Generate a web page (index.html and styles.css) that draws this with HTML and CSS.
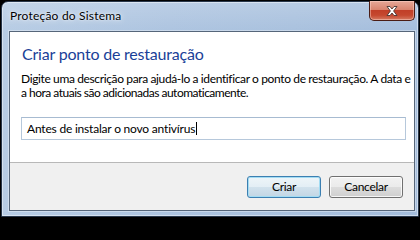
FILE: index.html
```html
<!DOCTYPE html>
<html lang="pt">
<head>
<meta charset="utf-8">
<title>Proteção do Sistema</title>
<link rel="stylesheet" href="styles.css">
</head>
<body>
<div class="window">
  <div class="titlebar">
    <div class="title">Proteção do Sistema</div>
    <div class="close">
      <svg width="12" height="10" viewBox="0 0 12 10">
        <path d="M1 0.5 H4 L6 3 L8 0.5 H11 L7.6 5 L11 9.5 H8 L6 7 L4 9.5 H1 L4.4 5 Z" fill="#ffffff" stroke="#4a3532" stroke-width="0.9" stroke-linejoin="round"/>
      </svg>
    </div>
  </div>
  <div class="client">
    <div class="content">
      <h1 class="heading">Criar ponto de restauração</h1>
      <p class="desc"><span class="desc-l1">Digite uma descrição para ajudá-lo a identificar o ponto de restauração. A data e</span> <span class="desc-l2">a hora atuais são adicionadas automaticamente.</span></p>
      <div class="input"><span class="input-text">Antes de instalar o novo antivírus</span><span class="caret"></span></div>
    </div>
    <div class="footer">
      <button class="btn btn-default">Criar</button>
      <button class="btn">Cancelar</button>
    </div>
  </div>
</div>
</body>
</html>
```
FILE: styles.css
```css
* { box-sizing: border-box; }
html, body { margin: 0; padding: 0; }
body {
  width: 420px;
  height: 219px;
  background: #000;
  padding: 1px;
  font-family: "Lato", "Liberation Sans", sans-serif;
  font-size: 12px;
  color: #000;
  overflow: hidden;
}
.window {
  width: 418px;
  height: 216px;
  border: 1px solid #27364a;
  border-radius: 7px 7px 0 0;
  background:
    linear-gradient(180deg, rgba(255,255,255,0.18) 0px, rgba(255,255,255,0) 30px),
    linear-gradient(90deg, #b7cce4 0%, #adc4e0 40%, #a9c1de 70%, #a4bddc 100%);
  box-shadow: inset 0 0 0 1px rgba(255,255,255,0.45);
  display: flex;
  flex-direction: column;
}
.titlebar {
  height: 29px;
  display: flex;
  justify-content: space-between;
  align-items: flex-start;
}
.title {
  padding-left: 8px;
  line-height: 28px;
  letter-spacing: 0.2px;
  color: #000;
  text-shadow: 0 0 6px rgba(255,255,255,0.9), 0 0 2px rgba(255,255,255,0.8);
}
.close {
  width: 46px;
  height: 20px;
  margin-top: -1px;
  margin-right: 3px;
  border: 1px solid #4a1c14;
  border-top: none;
  border-radius: 0 0 5px 5px;
  background: linear-gradient(180deg, #e6a898 0%, #d98570 45%, #c13f28 50%, #c5482f 75%, #d67a62 100%);
  box-shadow: inset 0 0 0 1px rgba(255,220,210,0.45);
  display: flex;
  align-items: center;
  justify-content: center;
}
.close svg { display: block; margin-top: 1px; }
.client {
  margin: 0 3px 0 7px;
  height: 180px;
  border: 1px solid #56667a;
  box-shadow: 0 0 0 1px rgba(255,255,255,0.35);
  display: flex;
  flex-direction: column;
}
.content {
  height: 130px;
  background: #fff;
  padding: 0 4px 0 11px;
}
.heading {
  margin: 12px 0 0 1px;
  font-size: 16px;
  font-weight: normal;
  line-height: 20px;
  letter-spacing: -0.2px;
  color: #1a3f98;
}
.desc {
  margin: 8px 0 0 0;
  line-height: 14px;
  white-space: nowrap;
  color: #000;
}
.desc-l1 { display: block; letter-spacing: -0.37px; }
.desc-l2 { display: block; letter-spacing: -0.5px; }
.input {
  margin-top: 17px;
  height: 23px;
  width: 385px;
  border: 1px solid #b6c8db;
  border-top-color: #a7bbd1;
  padding: 0 5px;
  display: flex;
  align-items: center;
  letter-spacing: -0.2px;
}
.caret {
  display: inline-block;
  width: 1px;
  height: 13px;
  background: #000;
  margin-left: 1px;
}
.footer {
  flex: 1;
  background: #f0f0f0;
  border-top: 1px solid #b8b8b8;
  display: flex;
  justify-content: flex-end;
  align-items: flex-start;
  gap: 8px;
  padding: 13px 11px 0 0;
}
.btn {
  width: 74px;
  height: 22px;
  border: 1px solid #707070;
  border-radius: 3px;
  background: linear-gradient(180deg, #f2f2f2 0%, #ebebeb 50%, #dddddd 50%, #cfcfcf 100%);
  box-shadow: inset 0 0 0 1px rgba(255,255,255,0.8);
  font-family: inherit;
  font-size: 12px;
  letter-spacing: -0.3px;
  color: #000;
  padding: 0;
  line-height: 20px;
}
.btn-default {
  border-color: #3c7fb1;
  background: linear-gradient(180deg, #eef5f9 0%, #e3eef5 50%, #d2e2ed 50%, #c3d6e4 100%);
  box-shadow: inset 0 0 0 1px #a3dcf3;
}
```
